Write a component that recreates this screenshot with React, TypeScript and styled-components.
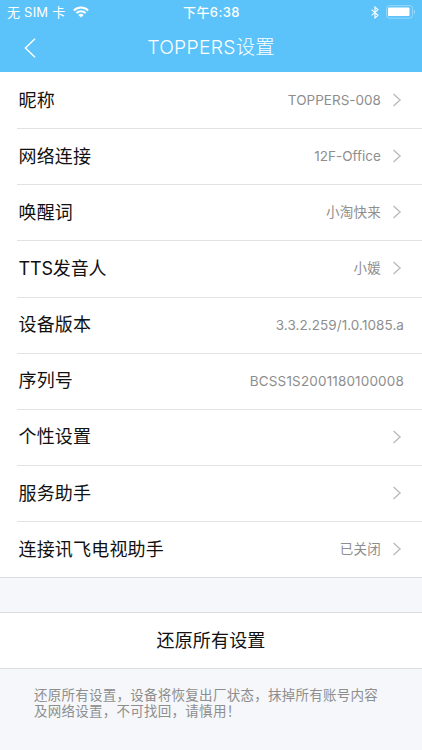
import React from "react";
import styled, { createGlobalStyle } from "styled-components";

const GlobalStyle = createGlobalStyle`
  * { box-sizing: border-box; }
  body {
    margin: 0;
    background: #f5f7fa;
    font-family: Inter, "Noto Sans CJK SC", sans-serif;
    color: #111;
  }
`;

const Screen = styled.div`
  width: 422px;
  height: 750px;
  overflow: hidden;
  background: #f5f7fa;
`;

const Header = styled.header`
  height: 72px;
  background: #5bc3f9;
  color: #fff;
`;

const StatusBar = styled.div`
  display: grid;
  grid-template-columns: 1fr auto 1fr;
  align-items: center;
  height: 24px;
  padding: 0 6px 0 7px;
  font-size: 13px;
  line-height: 24px;
`;

const Carrier = styled.div`
  display: flex;
  align-items: center;
  gap: 8px;
  letter-spacing: 0.22px;
`;

const Clock = styled.div`
  font-weight: 500;
  letter-spacing: 0.4px;
`;

const Indicators = styled.div`
  display: flex;
  justify-content: flex-end;
  align-items: center;
  gap: 7px;
`;

const NavBar = styled.div`
  display: grid;
  grid-template-columns: 60px 1fr 60px;
  height: 47px;
  align-items: center;
`;

const BackButton = styled.button`
  display: flex;
  padding: 0 0 0 24px;
  border: 0;
  background: none;
  color: inherit;
`;

const Title = styled.h1`
  margin: 0 0 1px;
  text-align: center;
  font-size: 19.3px;
  line-height: 28px;
  font-weight: 300;
  letter-spacing: 0.3px;
`;

const List = styled.div`
  background: #fff;
  border-bottom: 1px solid #dcdee1;
`;

const Row = styled.div`
  display: flex;
  align-items: center;
  height: 56.15px;
  margin-left: 17px;
  padding: 0 18px 0 1.5px;
  border-top: 1px solid transparent;

  & + & {
    border-top-color: #e2e2e4;
  }
`;

const Label = styled.span<{ $spacing: number }>`
  flex: 1;
  font-size: 18px;
  line-height: 26px;
  letter-spacing: ${(p) => p.$spacing}px;
`;

const Value = styled.span<{ $spacing: number }>`
  font-size: 13.5px;
  line-height: 20px;
  margin-bottom: 1px;
  color: #8e8e8e;
  letter-spacing: ${(p) => p.$spacing}px;
`;

const Arrow = styled.svg`
  margin: 0 2px 1px 11px;
`;

const ResetButton = styled.button`
  display: block;
  width: 100%;
  height: 57px;
  margin-top: 34px;
  padding: 0;
  border: solid #dcdee1;
  border-width: 1px 0;
  background: #fff;
  color: #111;
  font: inherit;
  font-size: 18px;
  line-height: 26px;
  letter-spacing: 0.18px;
`;

const Note = styled.p`
  margin: 19px 34px 0;
  white-space: nowrap;
  font-size: 13.5px;
  line-height: 15.8px;
  letter-spacing: 0.26px;
  color: #8e8e8e;
`;

type Item = {
  label: string;
  labelSpacing?: number;
  value?: string;
  spacing?: number;
  link?: boolean;
};

const items: Item[] = [
  { label: "昵称", value: "TOPPERS-008", spacing: 0.02, link: true },
  { label: "网络连接", value: "12F-Office", spacing: 0.02, link: true },
  { label: "唤醒词", value: "小淘快来", spacing: 0.26, link: true },
  { label: "TTS发音人", labelSpacing: -0.15, value: "小媛", spacing: 0.26, link: true },
  { label: "设备版本", value: "3.3.2.259/1.0.1085.a", spacing: 0.07 },
  { label: "序列号", value: "BCSS1S2001180100008", spacing: 0.16 },
  { label: "个性设置", link: true },
  { label: "服务助手", link: true },
  { label: "连接讯飞电视助手", value: "已关闭", spacing: 0.26, link: true },
];

const Wifi = () => (
  <svg width="16" height="12" viewBox="0 0 16 12" fill="none" stroke="#fff" strokeWidth="2">
    <path d="M0.9 4.5C4.9 0.5 11.1 0.5 15.1 4.5" />
    <path d="M3.4 7C6 4.5 10 4.5 12.6 7" />
    <path d="M5.4 8.9C6.9 7.5 9.1 7.5 10.6 8.9L8 11.5Z" fill="#fff" stroke="none" />
  </svg>
);

const Bluetooth = () => (
  <svg width="8" height="13" viewBox="0 0 8 13" fill="none" stroke="#fff" strokeWidth="1.1">
    <path d="M0.6 3.6L7 9.3L4 12V1L7 3.7L0.6 9.4" />
  </svg>
);

const Battery = () => (
  <svg width="30" height="14" viewBox="0 0 30 14">
    <rect x="0.6" y="0.6" width="26" height="12.6" rx="3" fill="none" stroke="#fff" strokeOpacity="0.35" />
    <rect x="2" y="2.6" width="21.5" height="8.4" rx="0.8" fill="#fff" />
    <path d="M28 4.8C29.3 5.6 29.3 8.2 28 9Z" fill="#fff" fillOpacity="0.5" />
  </svg>
);

export default function App() {
  return (
    <>
      <GlobalStyle />
      <Screen>
        <Header>
          <StatusBar>
            <Carrier>
              <span>无 SIM 卡</span>
              <Wifi />
            </Carrier>
            <Clock>下午6:38</Clock>
            <Indicators>
              <Bluetooth />
              <Battery />
            </Indicators>
          </StatusBar>
          <NavBar>
            <BackButton aria-label="返回">
              <svg width="12" height="20" viewBox="0 0 12 20" fill="none" stroke="#fff" strokeWidth="1.4">
                <path d="M11 0.7L1.4 10L11 19.3" />
              </svg>
            </BackButton>
            <Title>TOPPERS设置</Title>
          </NavBar>
        </Header>
        <List>
          {items.map((item) => (
            <Row key={item.label}>
              <Label $spacing={item.labelSpacing ?? 0.18}>{item.label}</Label>
              {item.value && <Value $spacing={item.spacing ?? 0}>{item.value}</Value>}
              {item.link && (
                <Arrow width="10" height="14" viewBox="0 0 10 14" fill="none" stroke="#b9b9bc" strokeWidth="1.3">
                  <path d="M1.5 1L8.1 7L1.5 13" />
                </Arrow>
              )}
            </Row>
          ))}
        </List>
        <ResetButton>还原所有设置</ResetButton>
        <Note>
          还原所有设置，设备将恢复出厂状态，抹掉所有账号内容
          <br />
          及网络设置，不可找回，请慎用！
        </Note>
      </Screen>
    </>
  );
}
